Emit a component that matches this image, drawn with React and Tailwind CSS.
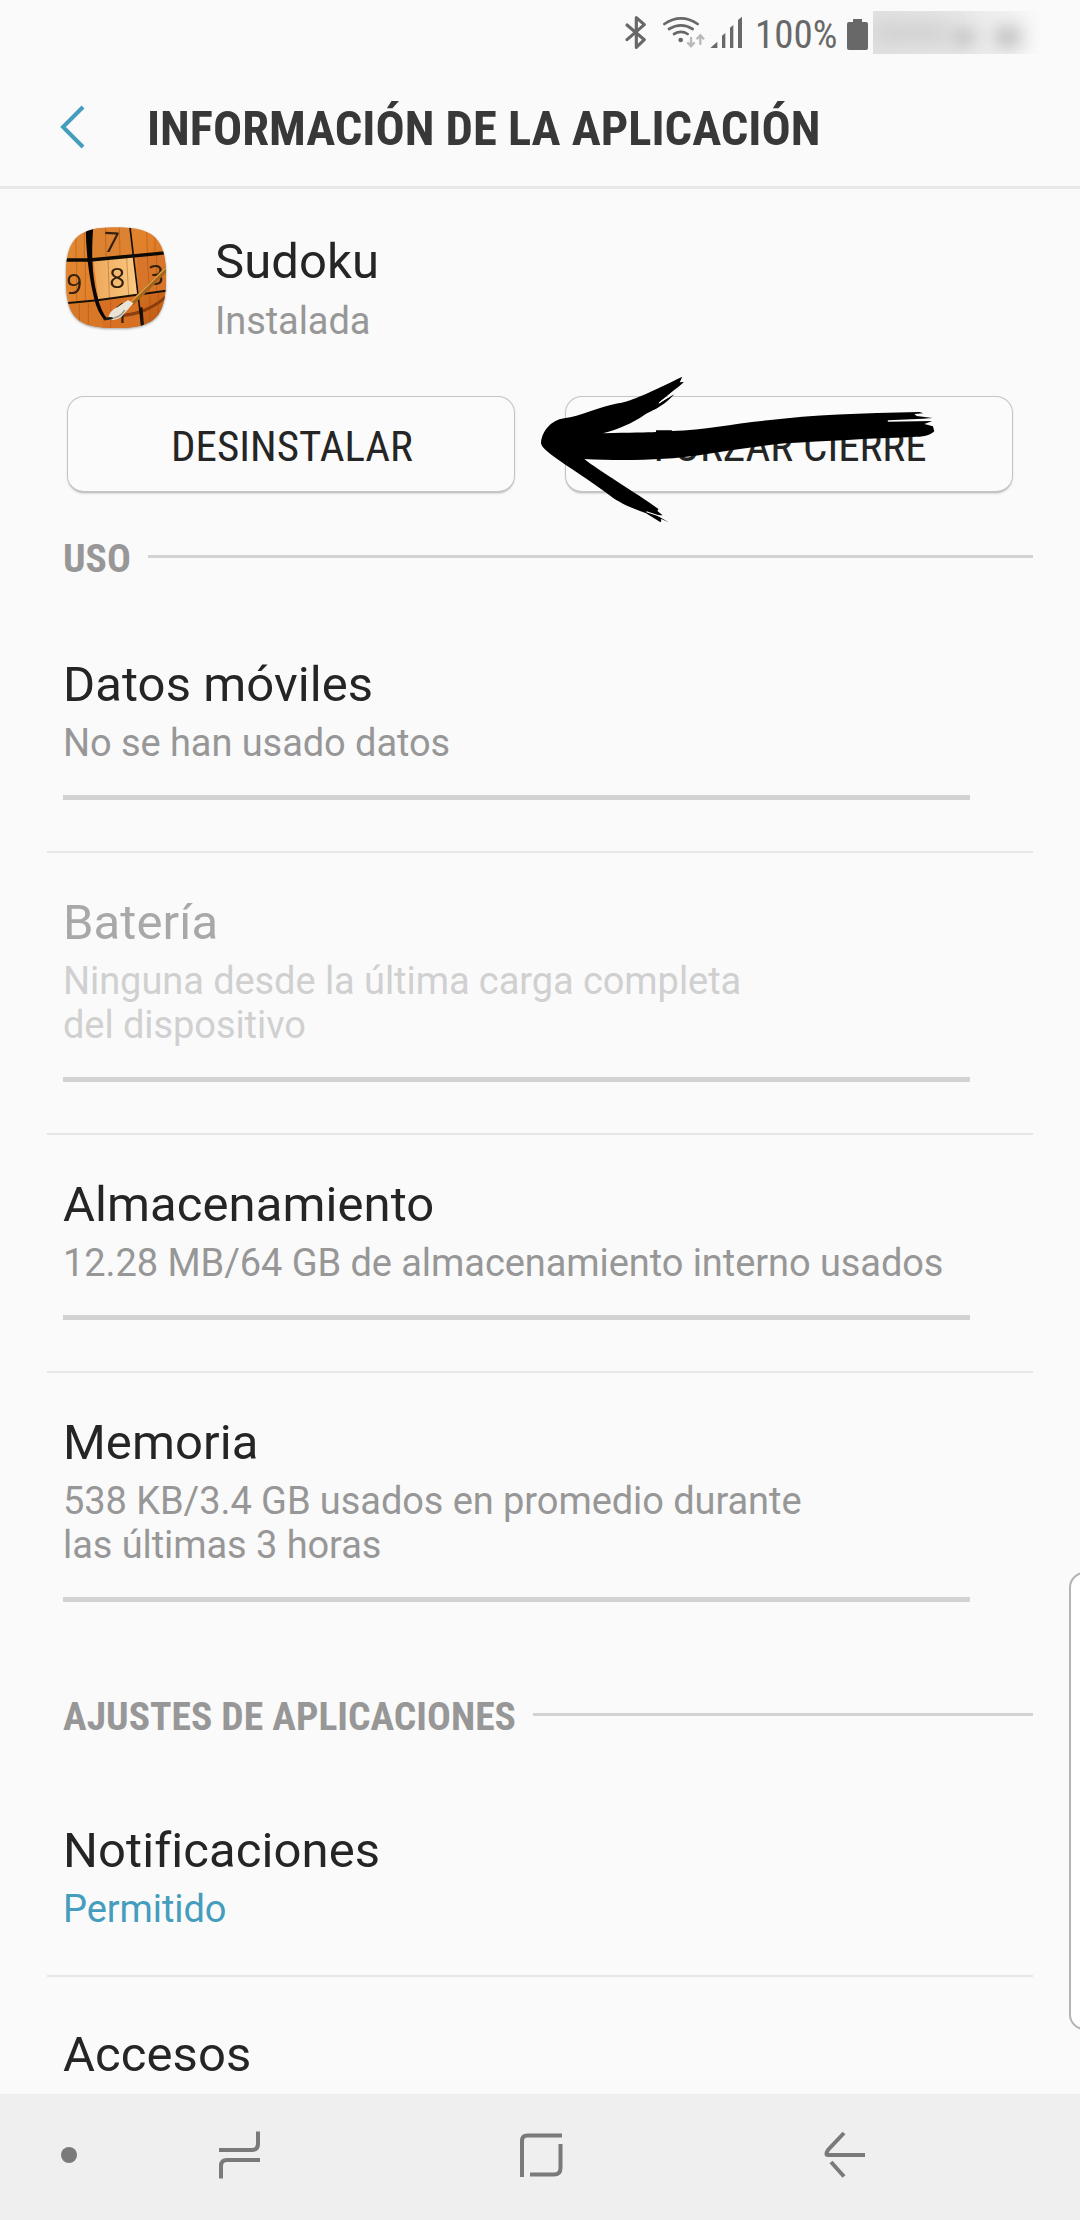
const CONDENSED = "font-['Roboto_Condensed','Roboto',sans-serif] [font-stretch:75%]";

function StatusIcons() {
  return (
    <svg className="h-[70px] w-[160px]" viewBox="0 0 480 210" fill="none" stroke="#686868">
      <path d="M81 75L133 119L109 142V53L133 74L81 119" strokeWidth="9.5" strokeLinecap="round" strokeLinejoin="round" />
      <path d="M193 72Q243 38 293 72M207 87Q243 65 278 87M222 102Q243 89 263 102" strokeWidth="8" strokeLinecap="round" />
      <circle cx="242" cy="120" r="7" fill="#686868" stroke="none" />
      <path d="M273 111V139M262 127L273 139L284 127M301 134V106M290 118L301 106L312 118" stroke="#b9b9b9" strokeWidth="7" />
      <path d="M331 144L352 125V144ZM366 107L376 99V144H366ZM390 83L400 75V144H390ZM414 60L426 50V144H414Z" fill="#686868" stroke="none" />
    </svg>
  );
}

function SudokuIcon() {
  return (
    <svg className="h-[102px] w-[102px] drop-shadow-[0_1px_1px_rgba(0,0,0,0.35)]" viewBox="75 49 306 306">
      <defs>
        <clipPath id="squircle">
          <path d="M228 50C345 50 378 85 378 201C378 320 345 352 228 352C110 352 77 320 77 201C77 85 110 50 228 50Z" />
        </clipPath>
        <linearGradient id="wood" x1="0" y1="0" x2="1" y2="1">
          <stop offset="0" stopColor="#e08a35" />
          <stop offset="0.5" stopColor="#e2802a" />
          <stop offset="1" stopColor="#b8520f" />
        </linearGradient>
        <linearGradient id="cell" x1="0" y1="0" x2="1" y2="0">
          <stop offset="0" stopColor="#eda75a" />
          <stop offset="1" stopColor="#fbcb84" />
        </linearGradient>
      </defs>
      <g clipPath="url(#squircle)">
        <rect x="70" y="45" width="320" height="320" fill="url(#wood)" />
        <path d="M160 50L276 50L286 130L160 142Z" fill="#dc8230" />
        <path d="M290 132L380 122V240L298 250Z" fill="#d8752a" />
        <path d="M88 280L175 270L195 352H88Z" fill="#d87726" />
        <path d="M178 268L298 252L306 352H190Z" fill="#d87024" />
        <path d="M160 148L282 138L297 252L175 268Z" fill="url(#cell)" />
        <path d="M245 310Q330 300 380 250V262Q320 315 245 320Z" fill="#6e2b05" opacity="0.7" />
        <path d="M108 50V145M133 50V142M196 50L198 137M238 50L240 134M320 50L322 126M345 60V122M110 155V270M136 155V268M204 146L208 262M260 140L266 256M322 135L328 245M350 130V242M118 280V352M145 278V352M212 270V352M330 255V352M355 248V352" stroke="#9b4a10" strokeWidth="2" opacity="0.65" fill="none" />
        <g fill="#33200c" className="font-['Open_Sans',sans-serif]" fontSize="84">
          <text x="191" y="124" transform="rotate(3 210 90)">7</text>
          <text x="79" y="250">9</text>
          <text x="208" y="232">8</text>
          <text x="324" y="224">3</text>
          <text x="221" y="338">1</text>
        </g>
        <path d="M77 148L150 148L380 126" stroke="#0d0905" strokeWidth="10" fill="none" />
        <path d="M77 278L172 269L380 240" stroke="#17100a" strokeWidth="6" fill="none" />
        <path d="M270 50L306 352" stroke="#17100a" strokeWidth="5" fill="none" />
        <path d="M303 290L308 352" stroke="#17100a" strokeWidth="9" />
        <path d="M137 50H160C153 130 157 200 172 255Q182 300 202 325L195 330Q172 305 162 262C145 190 138 120 137 50Z" fill="#080604" />
        <path d="M268 275L380 165V184L280 284Z" fill="#a5651c" />
        <path d="M272 275L380 169" stroke="#e0a145" strokeWidth="4" />
        <path d="M205 328Q205 300 232 290L264 268L280 278L252 310Q238 330 205 328Z" fill="#e9e4d8" />
        <path d="M222 322Q246 316 254 298" stroke="#9f978a" strokeWidth="5" fill="none" />
        <path d="M188 326Q205 315 222 322Q212 332 188 326Z" fill="#1e1a15" />
      </g>
    </svg>
  );
}

function BrushArrow() {
  return (
    <svg className="pointer-events-none absolute top-[360px] left-[520px] h-[180px] w-[540px]" viewBox="0 0 1568 540" preserveAspectRatio="none">
      <path d="M61 249C63 215 90 180 128 175C175 170 225 142 285 130C325 123 380 96 471 50L464 67L476 66C455 86 430 103 401 131L448 103C410 145 385 150 362 164C325 191 285 207 241 220C320 217 370 218 395 216V211H441V213C540 211 620 190 720 181C850 164 990 160 1160 156L1171 160L1145 162L1152 168L1198 174L1170 176L1068 181V185L1197 183L1174 192L1199 199L1203 214C1190 228 1170 231 1140 231C1010 236 890 243 770 250C680 260 600 273 520 286C430 300 300 304 187 297C225 330 340 400 402 447L399 453L414 466L396 466L432 487L412 478L408 487L366 460C330 446 290 430 262 407C205 363 145 325 92 285C78 272 62 262 61 249Z" />
      <path d="M404 129Q425 113 436 108M367 455L405 468M410 478L415 486" stroke="#fafafa" strokeWidth="3" fill="none" />
    </svg>
  );
}

function ActionButton({ children }) {
  return (
    <button className="flex h-[97px] w-[448px] items-center justify-center rounded-[17px] border border-b-2 border-[#c4c4c4] bg-[#fbfbfb] pt-[3px] pl-[2px] shadow-[0_1px_2px_rgba(0,0,0,0.12)]">
      <Condensed className="text-[43px] leading-[50px] text-[#252525]">{children}</Condensed>
    </button>
  );
}

function Condensed({ children, className }) {
  return <span className={`${CONDENSED} whitespace-nowrap ${className}`}>{children}</span>;
}

function SectionHeading({ children }) {
  return (
    <div className="flex h-[46px] items-center pr-[47px] pl-[63px]">
      <Condensed className="mt-[2px] text-[39.6px] leading-[46px] font-bold text-[#979797]">{children}</Condensed>
      <div className="mb-[3px] ml-[17px] h-[3px] flex-1 bg-[#d2d2d2]" />
    </div>
  );
}

function Row({ title, lines, disabled, accent, meter = true, divider = true }) {
  const titleColor = disabled ? "text-[#a8a8a8]" : "text-[#252525]";
  const subColor = accent ? "text-[#459dbd]" : disabled ? "text-[#d0d0d0]" : "text-[#979797]";
  return (
    <section>
      <div className="px-[63px] pt-[42px]">
        <h2 className={`text-[49px] leading-[56px] tracking-[0.08px] ${titleColor}`}>{title}</h2>
        <div className={`mt-2 text-[38px] leading-[44px] tracking-[-0.07px] whitespace-nowrap ${subColor}`}>
          {lines.map((line) => (
            <p key={line}>{line}</p>
          ))}
        </div>
        {meter && <div className="mt-[30px] h-[5px] w-[907px] bg-[#d2d2d2]" />}
      </div>
      {divider && <div className={`mx-[47px] h-[2px] bg-[#e6e6e6] ${meter ? "mt-[51px]" : "mt-[44px]"}`} />}
    </section>
  );
}

function NavBar() {
  return (
    <nav className="h-[126px] bg-[#efefef]">
      <svg className="h-[126px] w-[1080px]" viewBox="0 2094 1080 126" fill="none" stroke="#7a7a7a" strokeWidth="4">
        <circle cx="69" cy="2155" r="8" fill="#7a7a7a" stroke="none" />
        <path d="M219 2150H252Q258 2150 258 2144V2131.500M221 2178.500V2166Q221 2160 227 2160H260" />
        <path d="M562 2135.500H527Q522 2135.500 522 2141V2177M560.500 2144V2168Q560.500 2174.500 554 2174.500H530" />
        <path d="M865 2155H828Q825 2155 828 2150L844 2133M831 2162L844 2176.500" />
      </svg>
    </nav>
  );
}

export default function App() {
  return (
    <div className="relative flex h-[2220px] w-[1080px] flex-col overflow-hidden bg-[#fafafa] font-['Roboto',sans-serif] [font-variant-ligatures:common-ligatures]">
      <div className="flex h-[70px] items-center pl-[600px]">
        <StatusIcons />
        <Condensed className="-ml-[5px] w-[80px] text-[39px] leading-[46px] text-[#686868]">100%</Condensed>
        <svg className="ml-[12px] h-[32px] w-[21px]" viewBox="0 0 21 32">
          <path d="M6 0H15V3H19Q21 3 21 5V29Q21 31 19 31H2Q0 31 0 29V5Q0 3 2 3H6Z" fill="#686868" />
        </svg>
        <div className="mt-[-5px] ml-[5px] flex h-[43px] w-[168px] items-center overflow-hidden bg-gradient-to-r from-[#e2e2e2] via-[#e6e6e6] to-[#fafafa]">
          <div className="h-5 w-[75px] bg-[#cfcfcf] blur-[10px]" />
          <div className="mt-2 ml-1 h-4 w-[24px] rounded-full bg-[#c0c0c0] blur-[8px]" />
          <div className="mt-2 ml-[18px] h-5 w-[28px] rounded-full bg-[#b8b8b8] blur-[9px]" />
        </div>
      </div>

      <header className="flex h-[119px] items-center border-b-[3px] border-[#e8e8e8] pl-[59px]">
        <svg className="-mt-[2px] h-[44px] w-[28px]" viewBox="0 0 28 44" fill="none" stroke="#459dbd" strokeWidth="4">
          <path d="M24 2L4 22L24 42" />
        </svg>
        <Condensed className="mt-[2px] ml-[60px] text-[48.5px] leading-[58px] font-bold text-[#383838]">INFORMACIÓN DE LA APLICACIÓN</Condensed>
      </header>

      <main className="min-h-0 flex-1 overflow-hidden">
        <div className="flex h-[207px] pt-[38px] pl-[65px]">
          <SudokuIcon />
          <div className="ml-[48px] pt-[7px]">
            <h1 className="text-[49px] leading-[56px] tracking-[0.08px] text-[#252525]">Sudoku</h1>
            <p className="mt-[9px] text-[38px] leading-[44px] tracking-[-0.07px] text-[#979797]">Instalada</p>
          </div>
        </div>
        <div className="flex gap-[50px] pl-[67px]">
          <ActionButton>DESINSTALAR</ActionButton>
          <ActionButton>FORZAR CIERRE</ActionButton>
        </div>
        <div className="mt-[42px]">
          <SectionHeading>USO</SectionHeading>
        </div>
        <div className="mt-[34px]">
          <Row title="Datos móviles" lines={["No se han usado datos"]} />
          <Row title="Batería" lines={["Ninguna desde la última carga completa", "del dispositivo"]} disabled />
          <Row title="Almacenamiento" lines={["12.28 MB/64 GB de almacenamiento interno usados"]} />
          <Row title="Memoria" lines={["538 KB/3.4 GB usados en promedio durante", "las últimas 3 horas"]} divider={false} />
        </div>
        <div className="mt-[91px]">
          <SectionHeading>AJUSTES DE APLICACIONES</SectionHeading>
        </div>
        <div className="mt-[42px]">
          <Row title="Notificaciones" lines={["Permitido"]} accent meter={false} />
          <div className="px-[63px] pt-[50px]">
            <h2 className="text-[49px] leading-[56px] tracking-[0.08px] text-[#252525]">Accesos</h2>
          </div>
        </div>
      </main>

      <NavBar />

      <BrushArrow />
      <div className="absolute top-[1572px] -right-[20px] h-[458px] w-[31px] rounded-[16px] border-2 border-[#b4b4b4] bg-white" />
    </div>
  );
}
